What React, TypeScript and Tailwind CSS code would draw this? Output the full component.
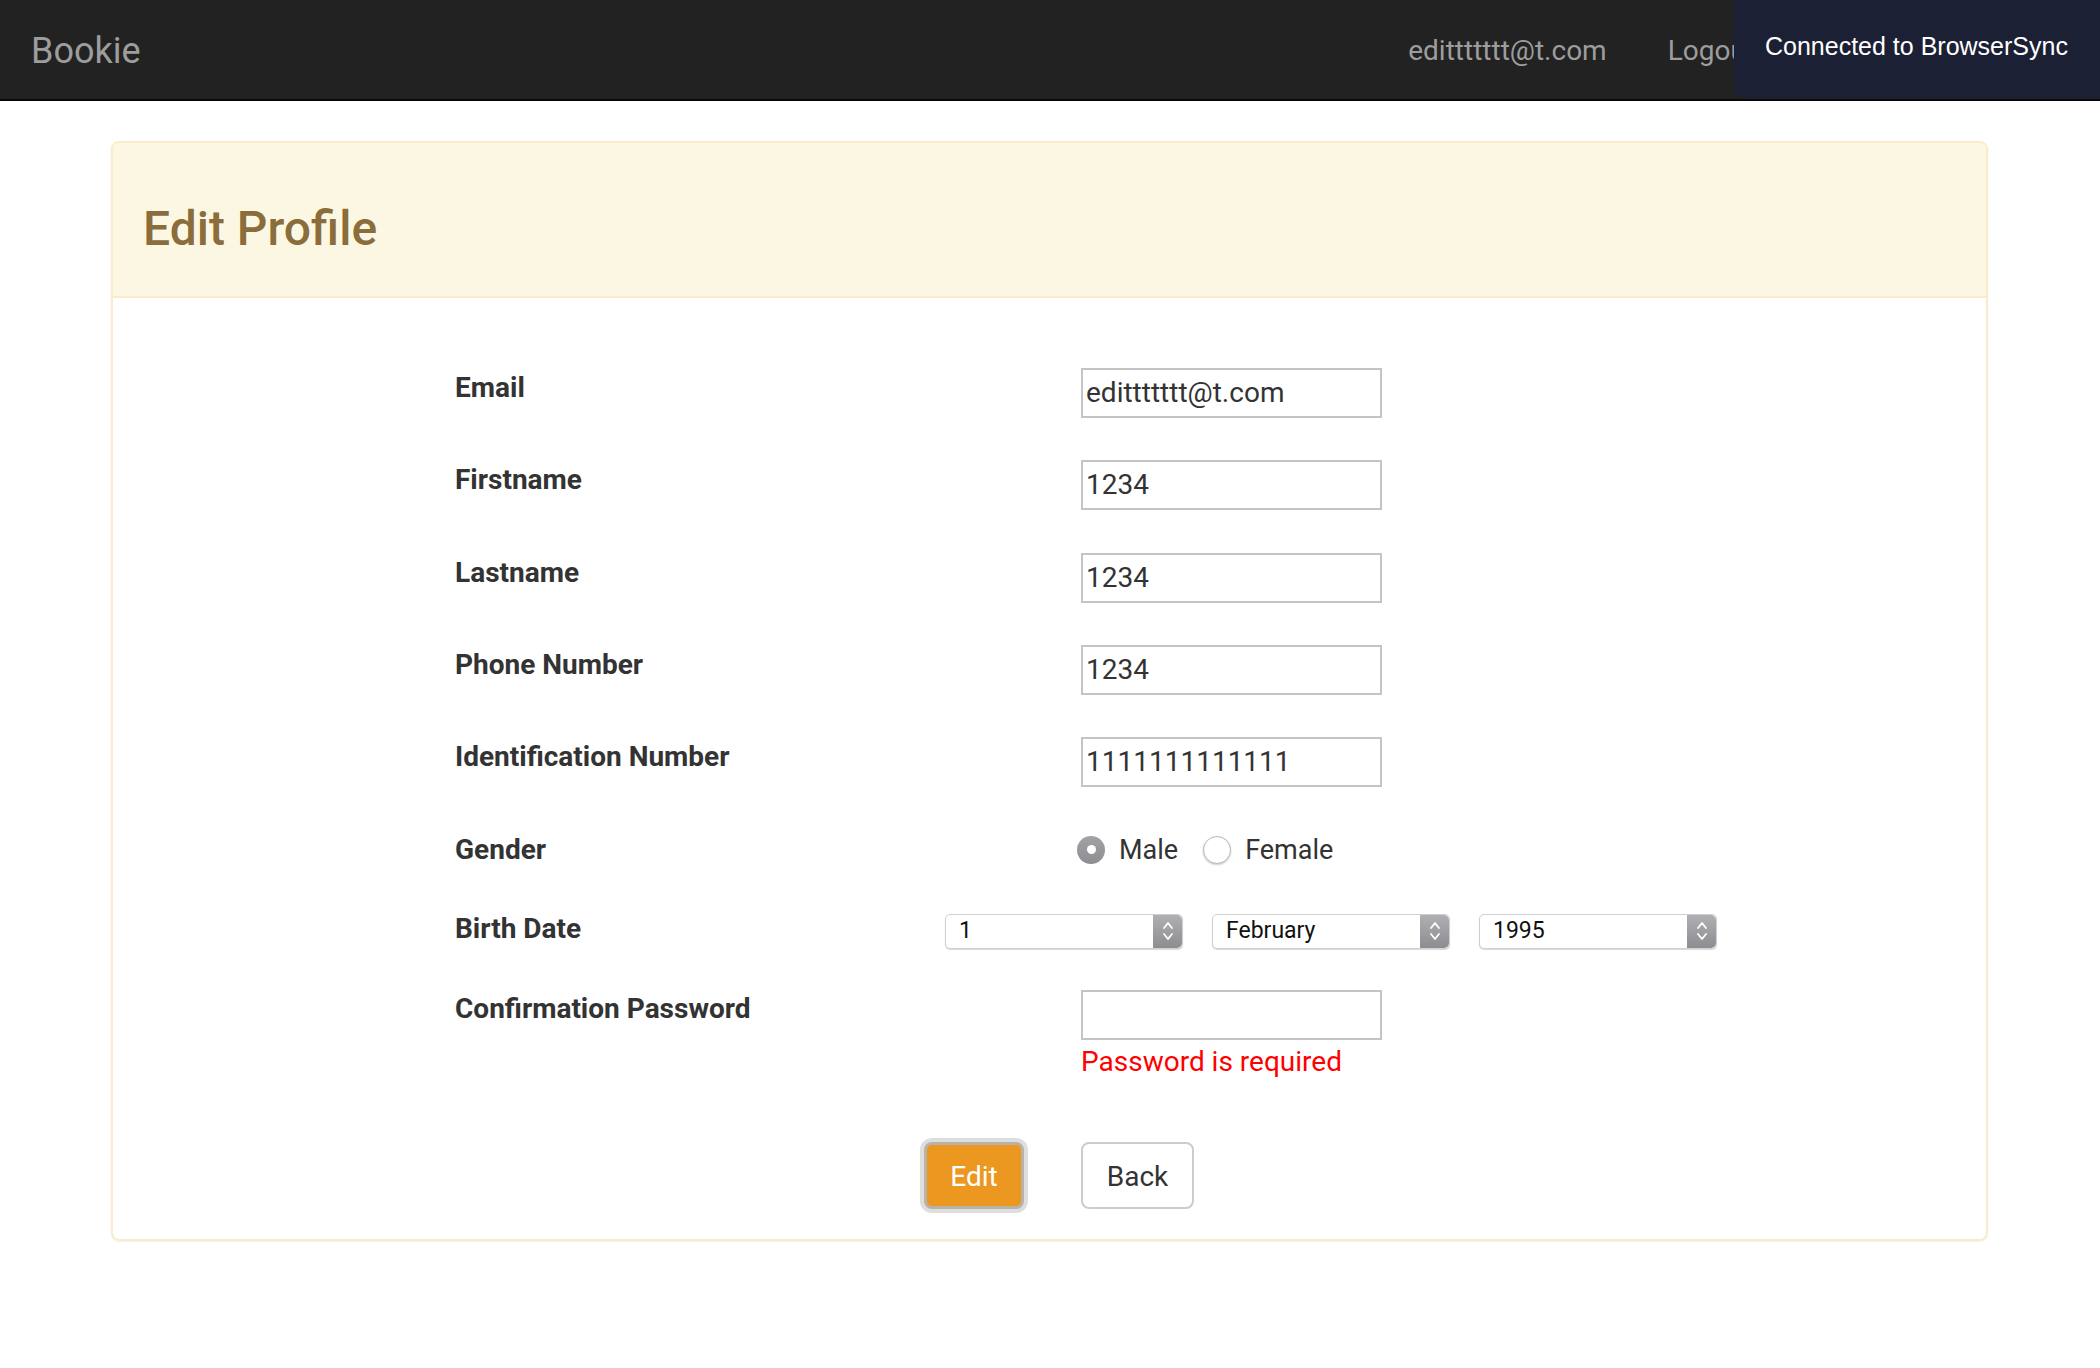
import React from 'react';

const fields = [
  { label: 'Email', value: 'edittttttt@t.com' },
  { label: 'Firstname', value: '1234' },
  { label: 'Lastname', value: '1234' },
  { label: 'Phone Number', value: '1234' },
  { label: 'Identification Number', value: '1111111111111' },
];

function SelectBox({ value }: { value: string }) {
  return (
    <div className="flex h-[35px] w-[238px] items-stretch rounded-[5px] border border-[#cfcfcf] bg-white shadow-[0_1px_1px_rgba(0,0,0,0.15)]">
      <span className="flex flex-1 items-center pl-[13px] text-[23px] text-[#111]">{value}</span>
      <span className="flex w-[29px] items-center justify-center rounded-r-[5px] bg-gradient-to-b from-[#b0b0b4] to-[#8c8c91]">
        <svg width="12" height="22" viewBox="0 0 12 22" fill="none" stroke="white" strokeWidth="1.8" strokeLinecap="round" strokeLinejoin="round">
          <path d="M2 8 L6 3 L10 8" />
          <path d="M2 14 L6 19 L10 14" />
        </svg>
      </span>
    </div>
  );
}

export default function App() {
  return (
    <div className="min-h-screen bg-white font-['Roboto',sans-serif] text-[#333]">
      {/* Navbar */}
      <nav className="relative flex h-[101px] items-center border-b-2 border-[#080808] bg-[#222] pl-[31px] pt-[2px]">
        <span className="text-[36px] text-[#9d9d9d]">Bookie</span>
        <div className="ml-auto mr-[345px] flex items-center gap-[61px] text-[28px] text-[#9d9d9d]">
          <span>edittttttt@t.com</span>
          <span>Logout</span>
        </div>

        {/* BrowserSync notice */}
        <div className="absolute right-0 top-0 flex h-[98px] w-[366px] items-center rounded-bl-[9px] bg-[#1c2035] pb-[4px] pl-[31px] font-['Liberation_Sans',sans-serif] text-[25px] text-white">
          Connected to BrowserSync
        </div>
      </nav>

      {/* Panel */}
      <div className="ml-[111px] mr-[112px] mt-[40px] rounded-[8px] border-2 border-[#faebcc] shadow-[0_1px_2px_rgba(0,0,0,0.05)]">
        <div className="rounded-t-[6px] border-b-2 border-[#faebcc] bg-[#fcf7e3] px-[30px] py-[20px]">
          <h2 className="mb-[20px] mt-[40px] text-[48px] font-medium leading-[1.1] text-[#8a6d3b]">Edit Profile</h2>
        </div>

        <div className="pb-[30px] pl-[342px] pt-[70px]">
          {fields.map((f) => (
            <div key={f.label} className="mb-[42.4px] flex h-[50px] items-start">
              <label className="w-[626px] text-[28px] font-bold leading-[40px]">{f.label}</label>
              <div className="flex h-[50px] w-[301px] items-center border-2 border-[#c4c4c4] pl-[3px] text-[28px] text-[#333]">
                {f.value}
              </div>
            </div>
          ))}

          {/* Gender */}
          <div className="mb-[39px] flex h-[40px] items-center">
            <label className="w-[622px] text-[28px] font-bold leading-[40px]">Gender</label>
            <div className="flex items-center text-[27px]">
              <span className="flex h-[28px] w-[28px] items-center justify-center rounded-full bg-gradient-to-b from-[#a2a2a6] to-[#8d8d92]">
                <span className="h-[9px] w-[9px] rounded-full bg-white" />
              </span>
              <span className="ml-[14px]">Male</span>
              <span className="ml-[25px] h-[28px] w-[28px] rounded-full border border-[#b8b8b8] bg-white shadow-[0_1px_2px_rgba(0,0,0,0.2)]" />
              <span className="ml-[14px]">Female</span>
            </div>
          </div>

          {/* Birth Date */}
          <div className="mb-[40px] flex h-[40px] items-start">
            <label className="w-[490px] text-[28px] font-bold leading-[40px]">Birth Date</label>
            <div className="mt-[5px] flex gap-[29px]">
              <SelectBox value="1" />
              <SelectBox value="February" />
              <SelectBox value="1995" />
            </div>
          </div>

          {/* Confirmation Password */}
          <div className="flex items-start">
            <label className="w-[626px] text-[28px] font-bold leading-[40px]">Confirmation Password</label>
            <div className="pt-[1px]">
              <div className="h-[50px] w-[301px] border-2 border-[#c4c4c4]" />
              <p className="pt-[2px] text-[28px] leading-[40px] text-[#ff0000]">Password is required</p>
            </div>
          </div>

          {/* Buttons */}
          <div className="mt-[60px] flex items-center">
            <div className="flex w-[626px] justify-end pr-[57px]">
              <button className="h-[67px] w-[100px] rounded-[8px] border-[3px] border-[#b9b2a6] bg-[#ec971f] pt-[3px] text-[28px] text-white shadow-[0_0_0_4px_#dedede]">
                Edit
              </button>
            </div>
            <button className="h-[67px] w-[113px] rounded-[8px] border-2 border-[#ccc] bg-white pt-[3px] text-[28px] text-[#333]">
              Back
            </button>
          </div>
        </div>
      </div>
    </div>
  );
}
